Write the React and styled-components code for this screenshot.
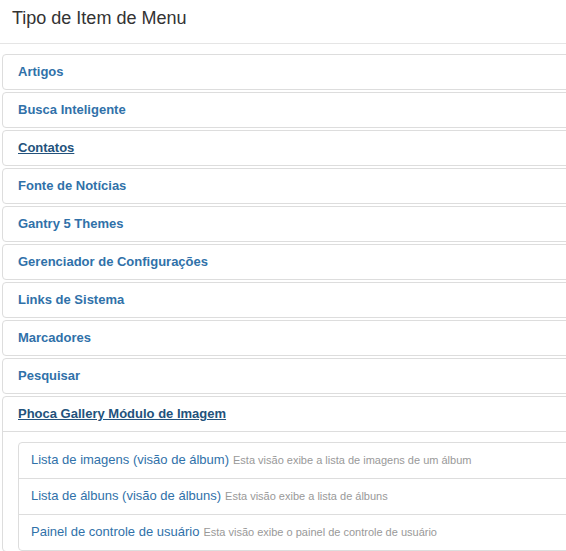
import React from 'react';
import styled, {createGlobalStyle} from 'styled-components';

const Global = createGlobalStyle`
    html, body {
        margin: 0;
        padding: 0;
        overflow: hidden;
        background: #fff;
        font-family: "Liberation Sans", Arial, sans-serif;
    }
`;

const Page = styled.div`
    width: 566px;
    height: 551px;
    overflow: hidden;
`;

const Header = styled.div`
    padding: 4px 12px 11px;
    border-bottom: 1px solid #e5e5e5;
`;

const Title = styled.h3`
    margin: 0;
    font-size: 18px;
    line-height: 28px;
    font-weight: normal;
    color: #333;
`;

const Accordion = styled.div`
    margin: 10px 0 0 2px;
    width: 640px;
    display: flex;
    flex-direction: column;
    gap: 2px;
`;

const Panel = styled.div`
    border: 1px solid #ddd;
    border-radius: 4px;
    background: #fff;
`;

const Heading = styled.div`
    padding: 10px 15px;
    font-size: 13px;
    line-height: 14px;
`;

const HeadLink = styled.a`
    font-weight: bold;
    color: ${p => (p.$active ? '#23527c' : '#3071a9')};
    text-decoration: ${p => (p.$active ? 'underline' : 'none')};
    cursor: pointer;
`;

const Body = styled.div`
    border-top: 1px solid #ddd;
    padding: 10px 0 0 15px;
`;

const List = styled.ul`
    margin: 0;
    padding: 0;
    list-style: none;
    border: 1px solid #ddd;
    border-radius: 4px;
`;

const Item = styled.li`
    padding: 10px 12px 11px;
    font-size: 13px;
    line-height: 14px;
    border-top: ${p => (p.$first ? 'none' : '1px solid #ddd')};
`;

const ItemLink = styled.a`
    color: #3071a9;
    text-decoration: none;
`;

const Desc = styled.small`
    font-size: 11px;
    color: #999;
    margin-left: 4px;
`;

const groups = [
    'Artigos',
    'Busca Inteligente',
    'Contatos',
    'Fonte de Notícias',
    'Gantry 5 Themes',
    'Gerenciador de Configurações',
    'Links de Sistema',
    'Marcadores',
    'Pesquisar',
];

const phocaItems = [
    {title: 'Lista de imagens (visão de álbum)', desc: 'Esta visão exibe a lista de imagens de um álbum'},
    {title: 'Lista de álbuns (visão de álbuns)', desc: 'Esta visão exibe a lista de álbuns'},
    {title: 'Painel de controle de usuário', desc: 'Esta visão exibe o painel de controle de usuário'},
];

export default function App() {
    return (
        <Page>
            <Global/>
            <Header>
                <Title>Tipo de Item de Menu</Title>
            </Header>
            <Accordion>
                {groups.map(name => (
                    <Panel key={name}>
                        <Heading>
                            <HeadLink $active={name === 'Contatos'}>{name}</HeadLink>
                        </Heading>
                    </Panel>
                ))}
                <Panel>
                    <Heading>
                        <HeadLink $active>Phoca Gallery Módulo de Imagem</HeadLink>
                    </Heading>
                    <Body>
                        <List>
                            {phocaItems.map((it, i) => (
                                <Item key={it.title} $first={i === 0}>
                                    <ItemLink>{it.title}</ItemLink>
                                    <Desc>{it.desc}</Desc>
                                </Item>
                            ))}
                        </List>
                    </Body>
                </Panel>
            </Accordion>
        </Page>
    );
}
